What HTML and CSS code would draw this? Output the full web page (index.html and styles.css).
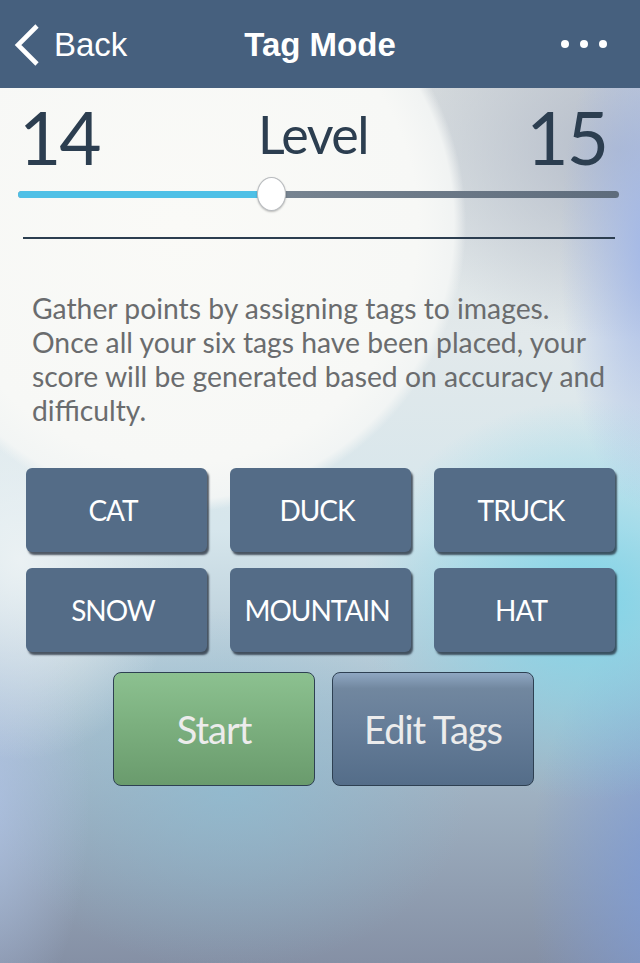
FILE: index.html
```html
<!DOCTYPE html>
<html lang="en">
<head>
<meta charset="utf-8">
<title>Tag Mode</title>
<link rel="stylesheet" href="styles.css">
</head>
<body>
<div class="screen">
  <header class="nav">
    <a class="nav-back" href="#">
      <svg class="chev" width="28" height="44" viewBox="0 0 28 44"><polyline points="23,3 4,22 23,41" fill="none" stroke="#fff" stroke-width="4.6"/></svg>
      <span>Back</span>
    </a>
    <h1 class="nav-title">Tag Mode</h1>
    <div class="nav-more"><i></i><i></i><i></i></div>
  </header>

  <section class="level">
    <div class="level-row">
      <span class="lv-num">14</span>
      <span class="lv-label">Level</span>
      <span class="lv-num lv-right">15</span>
    </div>
    <div class="slider">
      <div class="track"><div class="fill" style="width:41%"></div></div>
      <div class="thumb"></div>
    </div>
    <div class="divider"></div>
  </section>

  <p class="desc">Gather points by assigning tags to images.<br>Once all your six tags have been placed, your<br>score will be generated based on accuracy and<br>difficulty.</p>

  <div class="tags">
    <button class="tag">CAT</button>
    <button class="tag">DUCK</button>
    <button class="tag">TRUCK</button>
    <button class="tag">SNOW</button>
    <button class="tag">MOUNTAIN</button>
    <button class="tag">HAT</button>
  </div>

  <div class="actions">
    <button class="act act-start">Start</button>
    <button class="act act-edit">Edit Tags</button>
  </div>
</div>
</body>
</html>
```
FILE: styles.css
```css
html, body {
  margin: 0;
  padding: 0;
  background: #8791a6;
}

.screen {
  width: 640px;
  height: 963px;
  overflow: hidden;
  position: relative;
  font-family: Lato, "Open Sans", sans-serif;
  background:
    radial-gradient(circle at 178px 224px, #fafaf7 0, #f7f8f6 240px, rgba(244,246,245,0.9) 276px, rgba(244,246,245,0) 288px),
    radial-gradient(ellipse 260px 160px at 0px 220px, rgba(250,250,248,1), rgba(250,250,248,0)),
    radial-gradient(ellipse 160px 200px at 20px 560px, rgba(236,242,244,0.95), rgba(236,242,244,0)),
    radial-gradient(ellipse 90px 260px at 650px 250px, rgba(160,182,232,0.95), rgba(160,182,232,0)),
    radial-gradient(ellipse 240px 190px at 620px 150px, rgba(178,186,200,0.95), rgba(178,186,200,0)),
    radial-gradient(ellipse 230px 200px at 590px 600px, rgba(125,212,232,0.95), rgba(125,212,232,0)),
    radial-gradient(ellipse 140px 260px at 670px 880px, rgba(125,155,215,0.9), rgba(125,155,215,0)),
    radial-gradient(ellipse 110px 240px at -20px 800px, rgba(175,195,230,0.85), rgba(175,195,230,0)),
    radial-gradient(ellipse 240px 180px at 230px 790px, rgba(140,190,212,0.65), rgba(140,190,212,0)),
    linear-gradient(180deg, #d6dadb 0%, #e2e9eb 35%, #d6e6ec 55%, #aec4d2 72%, #8590a5 100%);
}

/* Header */
.nav {
  height: 88px;
  background: #46607e;
  display: flex;
  align-items: center;
  position: relative;
  color: #fff;
  font-family: "Liberation Sans", Arial, sans-serif;
}

.nav-back {
  display: flex;
  align-items: center;
  gap: 12px;
  padding-left: 14px;
  color: #fff;
  text-decoration: none;
  font-size: 33px;
  height: 88px;
}

.nav-back .chev {
  margin-top: 2px;
}

.nav-back span {
  margin-top: 2px;
}

.nav-title {
  position: absolute;
  left: 0;
  right: 0;
  text-align: center;
  margin: 0;
  font-size: 33px;
  font-weight: bold;
  pointer-events: none;
  line-height: 88px;
  top: 1px;
}

.nav-more {
  margin-left: auto;
  margin-right: 33px;
  display: flex;
  gap: 11px;
}

.nav-more i {
  width: 8px;
  height: 8px;
  border-radius: 50%;
  background: #fff;
  display: block;
}

/* Level */
.level {
  padding-top: 12px;
}

.level-row {
  display: grid;
  grid-template-columns: 1fr auto 1fr;
  align-items: start;
  padding: 0 33px 0 19px;
  color: #2c3e50;
}

.lv-num {
  font-size: 73px;
  line-height: 74px;
  letter-spacing: -2px;
}

.lv-right {
  text-align: right;
}

.lv-label {
  font-size: 52px;
  line-height: 52px;
  margin-top: 8px;
  letter-spacing: -1.5px;
}

.slider {
  position: relative;
  height: 35px;
  margin: 3px 21px 0 18px;
  display: flex;
  align-items: center;
}

.track {
  width: 100%;
  height: 7px;
  border-radius: 4px;
  background: linear-gradient(90deg, #8a96a1 0%, #74818e 50%, #5e6c7c 100%);
  overflow: hidden;
}

.fill {
  height: 100%;
  background: #4fc0e6;
}

.thumb {
  position: absolute;
  left: 239px;
  top: 0;
  width: 29px;
  height: 34px;
  border-radius: 50%;
  background: #fff;
  border: 1px solid #b9bcbf;
  box-sizing: border-box;
  box-shadow: 0 1px 2px rgba(0,0,0,0.25);
}

.divider {
  height: 2px;
  background: #2c3e50;
  margin: 25px 25px 0 23px;
}

/* Description */
.desc {
  margin: 52px 0 0 32px;
  font-size: 28.3px;
  line-height: 34px;
  color: #6a6c6e;
  white-space: nowrap;
}

/* Tags */
.tags {
  display: grid;
  grid-template-columns: repeat(3, 181px);
  grid-auto-rows: 84px;
  column-gap: 23px;
  row-gap: 16px;
  margin: 41px 0 0 26px;
}

.tag {
  border: none;
  border-radius: 6px;
  background: #546c87;
  color: #fff;
  font-family: Lato, "Open Sans", sans-serif;
  font-size: 28px;
  letter-spacing: -1px;
  box-shadow: 2px 3px 2px rgba(28,38,52,0.75);
  padding: 0 7px 0 0;
}

/* Actions */
.actions {
  display: flex;
  gap: 17px;
  margin: 20px 0 0 113px;
}

.act {
  width: 202px;
  height: 114px;
  border-radius: 8px;
  border: 1px solid #2e4052;
  color: #ececec;
  font-family: Lato, "Open Sans", sans-serif;
  font-size: 38px;
  letter-spacing: -1px;
  padding: 0;
}

.act-start {
  background: linear-gradient(180deg, #8cc190 0%, #7cb07f 45%, #6a9b6d 100%);
}

.act-edit {
  background: linear-gradient(180deg, #8fa7c2 0%, #71879f 14%, #677e99 45%, #546d89 100%);
}
```
